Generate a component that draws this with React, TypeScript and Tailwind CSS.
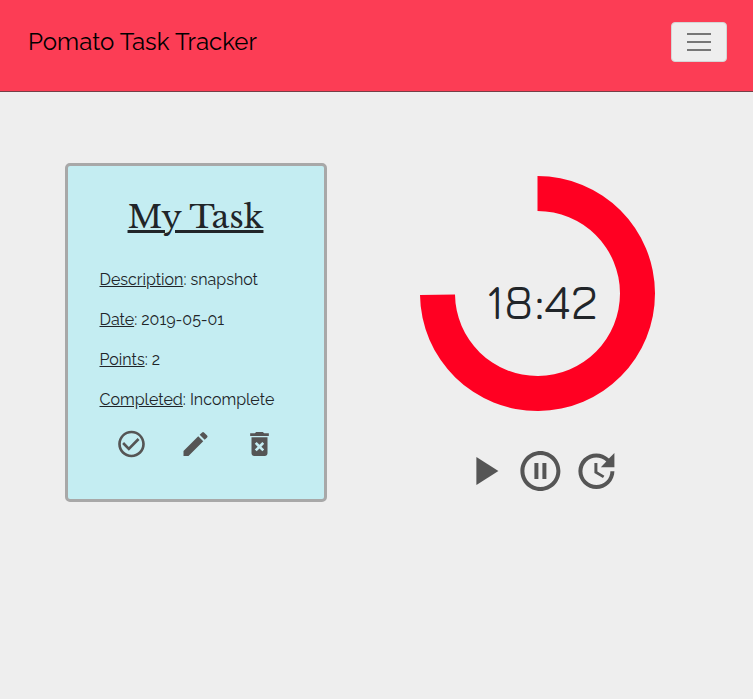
import { MdCheckCircleOutline, MdDeleteForever, MdEdit, MdPauseCircleOutline, MdPlayArrow, MdUpdate } from "react-icons/md";

const fields = [
  { label: "Description", value: "snapshot" },
  { label: "Date", value: "2019-05-01" },
  { label: "Points", value: "2" },
  { label: "Completed", value: "Incomplete" },
];

function Header() {
  return (
    <header className="flex h-[92px] items-start justify-between border-b border-[#753f47] bg-[#fc3d55] pl-7 pr-[26px] pt-[22px]">
      <h1 className="whitespace-nowrap text-2xl leading-10 tracking-[0.04px] text-black">Pomato Task Tracker</h1>
      <button aria-label="Toggle navigation" className="flex h-10 w-14 flex-col items-center justify-center gap-1.5 rounded border border-[#d5d5d5] bg-[#eeeeee]">
        <span className="h-0.5 w-6 bg-[#777777]" />
        <span className="h-0.5 w-6 bg-[#777777]" />
        <span className="h-0.5 w-6 bg-[#777777]" />
      </button>
    </header>
  );
}

function TaskCard() {
  return (
    <section className="ml-[65px] mt-[71px] flex h-[339px] w-[262px] flex-col rounded-[5px] border-[3px] border-[#a8a8a8] bg-[#c4edf2]">
      <h2 className="mt-7 whitespace-nowrap pr-px text-center font-['Libre_Baskerville','Liberation_Serif',serif] text-[32px] font-[450] leading-[46px] underline decoration-[3px]">My Task</h2>
      <div className="mt-7 flex flex-col gap-4 pl-[31.5px]">
        {fields.map((f) => (
          <p key={f.label} className="whitespace-nowrap text-base leading-6">
            <span className="underline">{f.label}</span>: {f.value}
          </p>
        ))}
      </div>
      <div className="mt-4 flex translate-x-[0.5px] justify-center gap-8 pr-0.5 text-[#555555]">
        <MdCheckCircleOutline size={32} />
        <MdEdit size={32} />
        <MdDeleteForever size={32} />
      </div>
    </section>
  );
}

function Timer() {
  return (
    <section className="ml-[93px] mt-[84px] flex w-[236px] flex-col items-center">
      <div className="relative h-[236px] w-[236px]">
        <svg viewBox="0 0 236 236" className="h-full w-full" fill="#ff0022">
          <path d="M117.5 0A117.5 117.5 0 1 1 0 119L35 118.5A82.5 82.5 0 1 0 117.5 35Z" />
        </svg>
        <span className="absolute left-[66px] top-[97px] whitespace-nowrap font-['Jura','Inter',sans-serif] text-[48px] font-medium leading-[56px]">18:42</span>
      </div>
      <div className="mt-[35px] flex translate-x-[0.4px] gap-2 pl-1 text-[#555555]">
        <MdPlayArrow size={48} />
        <MdPauseCircleOutline size={48} />
        <MdUpdate size={48} />
      </div>
    </section>
  );
}

export default function App() {
  return (
    <div className="min-h-[699px] bg-[#eeeeee] font-['Raleway','Lato',sans-serif] text-[#212529]">
      <Header />
      <main className="flex items-start">
        <TaskCard />
        <Timer />
      </main>
    </div>
  );
}
